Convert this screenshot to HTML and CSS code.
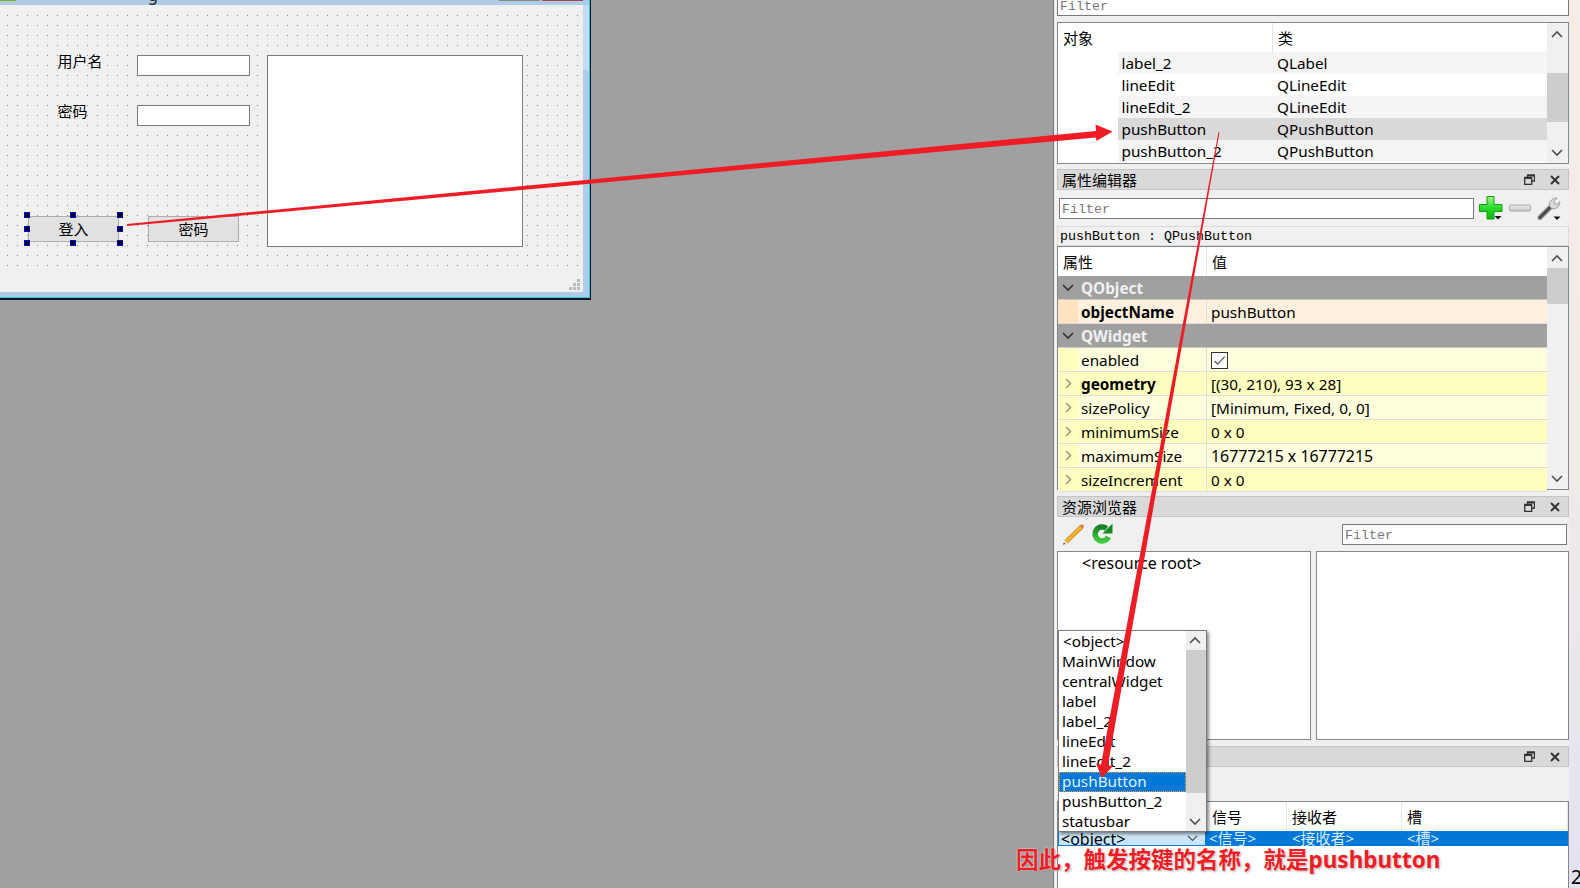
FILE: index.html
```html
<!DOCTYPE html>
<html lang="zh-CN">
<head>
  <meta charset="UTF-8">
  <title>Qt Designer</title>
  <link rel="stylesheet" href="styles.css">
</head>
<body>

  <!-- Zone centrale avec la fenetre en cours d'edition -->
  <div class="canvas">
    <div class="form-window">
      <div class="form-title">
        <span class="form-icon"></span>
        <span class="form-glyph">g</span>
        <span class="form-btn form-btn-max"></span>
        <span class="form-btn form-btn-close"></span>
      </div>
      <div class="form-body">
        <div class="form-grid">
          <span class="fw-label lbl-user">用户名</span>
          <span class="fw-label lbl-pass">密码</span>
          <div class="fw-input in-user"></div>
          <div class="fw-input in-pass"></div>
          <div class="fw-input in-text"></div>
          <div class="fw-button btn-login">登入</div>
          <div class="fw-button btn-pass">密码</div>
          <i class="handle h1"></i><i class="handle h2"></i><i class="handle h3"></i>
          <i class="handle h4"></i><i class="handle h5"></i>
          <i class="handle h6"></i><i class="handle h7"></i><i class="handle h8"></i>
        </div>
        <div class="form-status">
          <svg class="grip" width="11" height="11" viewBox="0 0 11 11">
            <path fill="#bbb" d="M8 0h3v3H8zM4 4h3v3H4zM8 4h3v3H8zM0 8h3v3H0zM4 8h3v3H4zM8 8h3v3H8z"/>
          </svg>
        </div>
      </div>
    </div>
  </div>

  <!-- Colonne de droite : docks -->
  <div class="side">
    <div class="docks">
      <div class="top-filter mono">Filter</div>

      <!-- Inspecteur d'objets -->
      <div class="tree">
        <div class="tree-main">
          <div class="head">
            <span class="head-cell tree-col">对象</span>
            <span class="head-cell">类</span>
          </div>
          <div class="tree-row alt"><span class="tree-col">label_2</span><span>QLabel</span></div>
          <div class="tree-row"><span class="tree-col">lineEdit</span><span>QLineEdit</span></div>
          <div class="tree-row alt"><span class="tree-col">lineEdit_2</span><span>QLineEdit</span></div>
          <div class="tree-row sel"><span class="tree-col">pushButton</span><span>QPushButton</span></div>
          <div class="tree-row alt"><span class="tree-col">pushButton_2</span><span>QPushButton</span></div>
        </div>
        <div class="vscroll">
          <svg class="chev" width="12" height="8" viewBox="0 0 12 8"><path d="M1 7l5-5 5 5" fill="none" stroke="#505050" stroke-width="1.6"/></svg>
          <div class="track"><div class="thumb thumb-tree"></div></div>
          <svg class="chev" width="12" height="8" viewBox="0 0 12 8"><path d="M1 1l5 5 5-5" fill="none" stroke="#505050" stroke-width="1.6"/></svg>
        </div>
      </div>

      <!-- Editeur de proprietes -->
      <div class="dock-title dock-first">
        <span class="dock-name">属性编辑器</span>
        <svg class="float-ic" width="11" height="11" viewBox="0 0 11 11"><path fill="none" stroke="#333" stroke-width="1.3" d="M3.5 3V1h7v6H8M.7 3.5h7v7h-7z"/><path stroke="#333" stroke-width="1.6" d="M3.5 1.700h7M.7 4.200h7"/></svg>
        <svg class="close-ic" width="10" height="10" viewBox="0 0 10 10"><path stroke="#333" stroke-width="2" d="M1 1l8 8M9 1l-8 8"/></svg>
      </div>
      <div class="prop-tools">
        <div class="prop-filter mono">Filter</div>
        <span class="tool-ic">
          <svg width="24" height="24" viewBox="0 0 24 24">
            <defs><linearGradient id="vert" x1="0" y1="0" x2="0" y2="1"><stop offset="0" stop-color="#a6f58c"/><stop offset=".5" stop-color="#28dc28"/><stop offset="1" stop-color="#12b412"/></linearGradient></defs>
            <path fill="url(#vert)" stroke="#159a15" d="M8 .5h7v8h8v7h-8v7.500H8v-7.500H.5v-7H8z"/>
            <path fill="#111" d="M15.500 20h7l-3.500 3.500z"/>
          </svg>
        </span>
        <span class="tool-ic">
          <svg width="24" height="24" viewBox="0 0 24 24">
            <defs><linearGradient id="gris" x1="0" y1="0" x2="0" y2="1"><stop offset="0" stop-color="#eee"/><stop offset="1" stop-color="#c4c4c4"/></linearGradient></defs>
            <rect x="1.500" y="9" width="21" height="6" rx="1" fill="url(#gris)" stroke="#a8a8a8"/>
          </svg>
        </span>
        <span class="tool-ic">
          <svg width="24" height="24" viewBox="0 0 24 24">
            <path stroke="#8a8a8a" stroke-width="5" stroke-linecap="round" d="M3 21.500l12-12"/>
            <path stroke="#444" stroke-width="2.400" stroke-linecap="round" d="M3 21.500l12-12"/>
            <path fill="#d8d8d8" stroke="#8a8a8a" stroke-width=".8" d="M12.500 10.500c-1-3.500 1.500-8 6.500-8.500l1 .4-3 3 .8 2.200 2.300.7 2.700-2.600c.6 4.300-3.800 8-7.800 7z"/>
            <path fill="#111" d="M16.500 20.500h7l-3.500 3.500z"/>
          </svg>
        </span>
      </div>
      <div class="prop-class mono">pushButton : QPushButton</div>

      <div class="props">
        <div class="props-main">
          <div class="head head-props">
            <span class="head-cell prop-col">属性</span>
            <span class="head-cell">值</span>
          </div>
          <div class="group"><svg class="arrow" width="12" height="8" viewBox="0 0 12 8"><path d="M1 1l5 5 5-5" fill="none" stroke="#333" stroke-width="1.7"/></svg><b>QObject</b></div>
          <div class="prop orange"><span class="gutter"></span><b class="pname">objectName</b><span class="pval">pushButton</span></div>
          <div class="group"><svg class="arrow" width="12" height="8" viewBox="0 0 12 8"><path d="M1 1l5 5 5-5" fill="none" stroke="#333" stroke-width="1.7"/></svg><b>QWidget</b></div>
          <div class="prop pale"><span class="gutter"></span><span class="pname">enabled</span>
            <span class="pval"><svg class="check" width="17" height="17" viewBox="0 0 17 17"><rect x=".5" y=".5" width="16" height="16" fill="#fff" stroke="#333"/><path d="M3.500 9l3.200 3.200 7-7.500" fill="none" stroke="#555" stroke-width="1.200"/></svg></span></div>
          <div class="prop deep"><span class="gutter"><svg width="7" height="11" viewBox="0 0 7 11"><path d="M1 1l4.500 4.500L1 10" fill="none" stroke="#888" stroke-width="1.400"/></svg></span><b class="pname">geometry</b><span class="pval">[(30, 210), 93 x 28]</span></div>
          <div class="prop pale"><span class="gutter"><svg width="7" height="11" viewBox="0 0 7 11"><path d="M1 1l4.500 4.500L1 10" fill="none" stroke="#888" stroke-width="1.400"/></svg></span><span class="pname">sizePolicy</span><span class="pval">[Minimum, Fixed, 0, 0]</span></div>
          <div class="prop deep"><span class="gutter"><svg width="7" height="11" viewBox="0 0 7 11"><path d="M1 1l4.500 4.500L1 10" fill="none" stroke="#888" stroke-width="1.400"/></svg></span><span class="pname">minimumSize</span><span class="pval">0 x 0</span></div>
          <div class="prop pale"><span class="gutter"><svg width="7" height="11" viewBox="0 0 7 11"><path d="M1 1l4.500 4.500L1 10" fill="none" stroke="#888" stroke-width="1.400"/></svg></span><span class="pname">maximumSize</span><span class="pval digits">16777215 x 16777215</span></div>
          <div class="prop deep"><span class="gutter"><svg width="7" height="11" viewBox="0 0 7 11"><path d="M1 1l4.500 4.500L1 10" fill="none" stroke="#888" stroke-width="1.400"/></svg></span><span class="pname">sizeIncrement</span><span class="pval">0 x 0</span></div>
        </div>
        <div class="vscroll">
          <svg class="chev" width="12" height="8" viewBox="0 0 12 8"><path d="M1 7l5-5 5 5" fill="none" stroke="#505050" stroke-width="1.6"/></svg>
          <div class="track"><div class="thumb thumb-props"></div></div>
          <svg class="chev" width="12" height="8" viewBox="0 0 12 8"><path d="M1 1l5 5 5-5" fill="none" stroke="#505050" stroke-width="1.6"/></svg>
        </div>
      </div>

      <!-- Navigateur de ressources -->
      <div class="dock-title">
        <span class="dock-name">资源浏览器</span>
        <svg class="float-ic" width="11" height="11" viewBox="0 0 11 11"><path fill="none" stroke="#333" stroke-width="1.3" d="M3.500 3V1h7v6H8M.7 3.500h7v7h-7z"/><path stroke="#333" stroke-width="1.600" d="M3.500 1.700h7M.7 4.200h7"/></svg>
        <svg class="close-ic" width="10" height="10" viewBox="0 0 10 10"><path stroke="#333" stroke-width="2" d="M1 1l8 8M9 1l-8 8"/></svg>
      </div>
      <div class="res-tools">
        <svg width="23" height="22" viewBox="0 0 23 22">
          <path fill="#f3b331" stroke="#b97f14" stroke-width=".8" d="M18 2.500l3 2.700L5.500 20 2.800 17.500z"/>
          <path fill="#e0703c" d="M18 2.500c1-1.300 2.400-1.300 3.200-.4.8.9.8 2.100-.2 3.100z"/>
          <path fill="#f1dcb0" d="M2.800 17.500L5.500 20 1.200 21.500z"/>
          <path fill="#444" d="M1 21.800l.8-2.200 1.500 1.400z"/>
        </svg>
        <svg class="refresh" width="21" height="22" viewBox="0 0 21 22">
          <defs><linearGradient id="vertf" x1="0" y1="0" x2="0" y2="1"><stop offset="0" stop-color="#1c7f2a"/><stop offset="1" stop-color="#3fce3f"/></linearGradient></defs>
          <path fill="none" stroke="url(#vertf)" stroke-width="5.500" d="M16.500 14a7 7 0 1 1-2-8.500"/>
          <path fill="#168a26" d="M10.500 10.500h10V.5z"/>
        </svg>
        <div class="res-filter mono">Filter</div>
      </div>
      <div class="res-panels">
        <div class="res-tree">&lt;resource root&gt;</div>
        <div class="res-view"></div>
      </div>

      <!-- Editeur signaux / slots -->
      <div class="dock-title">
        <span class="dock-name"></span>
        <svg class="float-ic" width="11" height="11" viewBox="0 0 11 11"><path fill="none" stroke="#333" stroke-width="1.300" d="M3.500 3V1h7v6H8M.7 3.500h7v7h-7z"/><path stroke="#333" stroke-width="1.600" d="M3.500 1.700h7M.7 4.200h7"/></svg>
        <svg class="close-ic" width="10" height="10" viewBox="0 0 10 10"><path stroke="#333" stroke-width="2" d="M1 1l8 8M9 1l-8 8"/></svg>
      </div>
      <div class="sig-tools"></div>
      <div class="sig-table">
        <div class="sig-head">
          <span class="sig-c0"></span>
          <span class="sig-c1">信号</span>
          <span class="sig-c2">接收者</span>
          <span class="sig-c3">槽</span>
        </div>
        <div class="sig-row">
          <span class="sig-c0 sig-combo">&lt;object&gt;
            <svg class="combo-arrow" width="11" height="7" viewBox="0 0 11 7"><path d="M1 1l4.500 4.500L10 1" fill="none" stroke="#555" stroke-width="1.200"/></svg>
          </span>
          <span class="sig-c1">&lt;信号&gt;</span>
          <span class="sig-c2">&lt;接收者&gt;</span>
          <span class="sig-c3">&lt;槽&gt;</span>
        </div>
      </div>
    </div>
    <div class="strip">2</div>
  </div>

  <!-- Liste deroulante ouverte -->
  <div class="popup">
    <div class="popup-list">
      <div class="popup-item first">&lt;object&gt;</div>
      <div class="popup-item">MainWindow</div>
      <div class="popup-item">centralWidget</div>
      <div class="popup-item">label</div>
      <div class="popup-item">label_2</div>
      <div class="popup-item">lineEdit</div>
      <div class="popup-item">lineEdit_2</div>
      <div class="popup-item current">pushButton</div>
      <div class="popup-item">pushButton_2</div>
      <div class="popup-item">statusbar</div>
    </div>
    <div class="vscroll popup-scroll">
      <svg class="chev" width="12" height="8" viewBox="0 0 12 8"><path d="M1 7l5-5 5 5" fill="none" stroke="#505050" stroke-width="1.6"/></svg>
      <div class="track"><div class="thumb thumb-popup"></div></div>
      <svg class="chev" width="12" height="8" viewBox="0 0 12 8"><path d="M1 1l5 5 5-5" fill="none" stroke="#505050" stroke-width="1.6"/></svg>
    </div>
  </div>

  <!-- Annotations rouges ajoutees sur la capture -->
  <svg class="marks" width="1580" height="888" viewBox="0 0 1580 888">
    <path fill="#ee1c25" d="M127 224L1096 131 1095.500 124.500 1112.500 131.500 1096.500 141 1096 137.500 127 226z"/>
    <path fill="#ee1c25" d="M1218.500 132L1219.500 132.200 1108 765 1112.500 766.500 1102 778 1096 763.500 1101 764.500z"/>
  </svg>
  <div class="note">因此，触发按键的名称，就是pushbutton</div>

</body>
</html>
```

FILE: styles.css
```css
/* Base de la page */
* {
  box-sizing: border-box;
}

html, body {
  margin: 0;
  height: 888px;
  overflow: hidden;
}

body {
  width: 1580px;
  display: flex;
  position: relative;
  background: #a0a0a0;
  color: #000;
  font-family: "Noto Sans", "Noto Sans CJK SC", sans-serif;
  font-size: 15.3px;
}

.mono {
  font-family: "Liberation Mono", "Noto Sans CJK SC", monospace;
  font-size: 13.33px;
}

/* Zone centrale */
.canvas {
  flex: 0 0 1053px;
  position: relative;
  background: #a0a0a0;
}

.form-window {
  position: absolute;
  left: 0;
  top: 0;
  width: 591px;
  height: 300px;
  display: flex;
  flex-direction: column;
  background: #afcbe8;
  border-right: 1px solid #0a1a22;
  border-bottom: 2px solid #0a1a22;
  box-shadow: inset -1px -1px 0 #35c5e8;
  padding: 0 7px 6px 0;
}

/* Bord droit plus clair en haut de la fenetre */
.form-window::after {
  content: "";
  position: absolute;
  right: 1px;
  top: 5px;
  width: 6px;
  height: 65px;
  background: #c6dbef;
}

.form-title {
  height: 5px;
  flex: none;
  position: relative;
  overflow: hidden;
}

.form-icon {
  position: absolute;
  left: 0;
  top: 0;
  width: 16px;
  height: 1px;
  background: #7cb518;
}

.form-glyph {
  position: absolute;
  left: 148px;
  top: -15px;
  font-size: 16px;
  line-height: 20px;
  color: #222;
}

.form-btn {
  position: absolute;
  top: 0;
  width: 41px;
  height: 1px;
  background: #888;
}

.form-btn-max {
  left: 499px;
}

.form-btn-close {
  left: 542px;
  background: #a04848;
}

.form-body {
  flex: 1;
  display: flex;
  flex-direction: column;
  background: #f0f0f0;
  padding-top: 10px;
}

/* Grille de points du formulaire */
.form-grid {
  flex: none;
  width: 580px;
  height: 256px;
  position: relative;
  background-image: radial-gradient(circle at 7.5px 0.5px, #808080 0.6px, transparent 0.75px);
  background-size: 10px 10px;
}

.form-status {
  flex: 1;
  display: flex;
  justify-content: flex-end;
  align-items: flex-end;
  padding: 0 3px 2px 0;
}

.fw-label {
  position: absolute;
  font-size: 15px;
  line-height: 20px;
}

.lbl-user {
  left: 57.5px;
  top: 36px;
}

.lbl-pass {
  left: 57.5px;
  top: 86px;
}

.fw-input {
  position: absolute;
  background: #fff;
  border: 1px solid #7a7a7a;
}

.in-user {
  left: 137px;
  top: 40px;
  width: 113px;
  height: 21px;
}

.in-pass {
  left: 137px;
  top: 90px;
  width: 113px;
  height: 21px;
}

.in-text {
  left: 267px;
  top: 40px;
  width: 256px;
  height: 192px;
}

.fw-button {
  position: absolute;
  top: 201px;
  width: 91px;
  height: 26px;
  display: flex;
  align-items: center;
  justify-content: center;
  padding-bottom: 2px;
  background: #e1e1e1;
  border: 1px solid #adadad;
  font-size: 15px;
}

.btn-login {
  left: 28px;
}

.btn-pass {
  left: 148px;
}

.handle {
  position: absolute;
  width: 6px;
  height: 6px;
  background: #000;
  border: 1px solid #0000e0;
}

.h1 { left: 24px; top: 197px; }
.h2 { left: 70px; top: 197px; }
.h3 { left: 117px; top: 197px; }
.h4 { left: 24px; top: 211px; }
.h5 { left: 117px; top: 211px; }
.h6 { left: 24px; top: 225px; }
.h7 { left: 70px; top: 225px; }
.h8 { left: 117px; top: 225px; }

/* Colonne de droite */
.side {
  flex: 1;
  display: flex;
  background: #f0f0f0;
  border-left: 1px solid #777;
  padding-left: 3px;
}

.docks {
  flex: 0 0 512px;
  display: flex;
  flex-direction: column;
}

.strip {
  flex: 1;
  display: flex;
  align-items: flex-end;
  padding-left: 2px;
  font-size: 19px;
  line-height: 22px;
  background: linear-gradient(#f5ece6, #f1ebe8 50%, #e3e2f0);
  height: 888px;
}

.top-filter {
  height: 16px;
  flex: none;
  background: #fff;
  border: 1px solid #7a7a7a;
  border-top: 0;
  padding-left: 2px;
  line-height: 13px;
  color: #777;
}

/* Arbres et tableaux */
.tree {
  flex: none;
  height: 142px;
  margin-top: 6px;
  display: flex;
  background: #fff;
  border: 1px solid #828790;
}

.tree-main, .props-main {
  flex: 1;
  min-width: 0;
  background: #fff;
}

.head {
  height: 29px;
  display: flex;
  align-items: center;
  font-size: 15px;
}

.head-cell {
  height: 100%;
  display: flex;
  align-items: center;
  padding-left: 5px;
}

.tree-col {
  flex: 0 0 215px;
}

.head .tree-col {
  border-right: 1px solid #e5e5e5;
}

.tree-row {
  height: 22px;
  margin-left: 60px;
  display: flex;
  align-items: center;
  line-height: 22px;
  padding-left: 3.5px;
}

.tree-row .tree-col {
  flex: 0 0 155.5px;
}

.tree-row.alt {
  background: #f5f5f5;
}

.tree-row.sel {
  background: #d9d9d9;
}

.vscroll {
  flex: 0 0 21px;
  width: 21px;
  display: flex;
  flex-direction: column;
  align-items: center;
  background: #f0f0f0;
  padding: 7px 0 6px;
}

.chev {
  flex: none;
  margin-right: 2px;
}

.track {
  flex: 1;
  width: 100%;
  position: relative;
}

.thumb {
  position: absolute;
  left: 0;
  right: 0;
  background: #cdcdcd;
}

.thumb-tree {
  top: 35px;
  height: 49px;
}

.thumb-props {
  top: 6px;
  height: 36px;
}

.thumb-popup {
  top: 6px;
  height: 143px;
}

/* Titres des docks */
.dock-title {
  flex: none;
  height: 21px;
  margin-top: 6px;
  display: flex;
  align-items: center;
  background: #d9d9d9;
  border: 1px solid #c4c4c4;
  padding: 0 8px 0 4px;
}

.dock-first {
  margin-top: 5px;
}

.dock-name {
  flex: 1;
  font-size: 15px;
}

.float-ic {
  margin-right: 15px;
}

/* Barre du filtre des proprietes */
.prop-tools {
  flex: none;
  height: 36px;
  display: flex;
  align-items: center;
  padding: 0 6px 0 2px;
}

.prop-filter {
  flex: 0 0 415px;
  height: 21px;
  background: #fff;
  border: 1px solid #7a7a7a;
  padding-left: 2px;
  line-height: 21px;
  color: #777;
  margin-right: 3px;
}

.tool-ic {
  flex: 1;
  display: flex;
  justify-content: center;
}

.prop-class {
  flex: none;
  height: 20px;
  line-height: 20px;
  padding-left: 2px;
  background: #f0f0f0;
  border: 1px solid #dcdcdc;
}

.props {
  flex: none;
  height: 244px;
  display: flex;
  background: #fff;
  border: 1px solid #828790;
}

.head-props .prop-col {
  flex: 0 0 149px;
  border-right: 1px solid #e5e5e5;
}

.group {
  height: 24px;
  display: flex;
  align-items: center;
  background: #a0a0a0;
  color: #f0f0f0;
  border-bottom: 1px solid #c8c8c8;
}

.group b {
  font-weight: 700;
  margin-left: 7px;
}

.arrow {
  margin-left: 4px;
  flex: none;
}

.prop {
  height: 24px;
  display: flex;
  align-items: center;
  border-bottom: 1px solid #dcdcdc;
  overflow: hidden;
}

.gutter {
  flex: 0 0 20px;
  height: 100%;
  display: flex;
  align-items: center;
  justify-content: center;
}

.pname {
  flex: 0 0 129px;
  height: 100%;
  line-height: 25px;
  padding-left: 3px;
  border-right: 1px solid #dcdcdc;
}

.pval {
  padding: 1px 0 0 4px;
  height: 100%;
  line-height: 22px;
  display: flex;
  align-items: center;
}

.digits {
  font-size: 15.9px;
}

.orange {
  background: #fff1de;
}

.orange .gutter {
  background: #ffe4bf;
}

.pale {
  background: #ffffde;
}

.pale .gutter {
  background: #ffffbf;
}

.deep {
  background: #ffffbf;
}

/* Navigateur de ressources */
.res-tools {
  flex: none;
  height: 34px;
  display: flex;
  align-items: center;
  padding: 0 2px 0 5px;
}

.refresh {
  margin-left: 7px;
}

.res-filter {
  margin-left: auto;
  width: 225px;
  height: 21px;
  background: #fff;
  border: 1px solid #7a7a7a;
  padding-left: 2px;
  line-height: 22px;
  color: #777;
}

.res-panels {
  flex: none;
  height: 189px;
  display: flex;
  gap: 5px;
}

.res-tree {
  flex: 0 0 254px;
  background: #fff;
  border: 1px solid #828790;
  padding-left: 24px;
  font-size: 16px;
  line-height: 22px;
}

.res-view {
  flex: 1;
  background: #fff;
  border: 1px solid #828790;
}

.sig-tools {
  flex: none;
  height: 34px;
}

/* Tableau signaux / slots */
.sig-table {
  flex: 1;
  background: #fff;
  border-top: 1px solid #828790;
  border-left: 1px solid #828790;
  border-right: 1px solid #828790;
}

.sig-head, .sig-row {
  display: flex;
  font-size: 15px;
}

.sig-head {
  height: 29px;
  align-items: center;
}

.sig-head span {
  height: 100%;
  display: flex;
  align-items: center;
  border-right: 1px solid #e5e5e5;
}

.sig-row {
  height: 15px;
  line-height: 15px;
  background: #0078d7;
  color: #dcecfa;
  overflow: hidden;
}

.sig-c0 {
  flex: 0 0 148px;
}

.sig-c1 {
  flex: 0 0 81px;
  padding-left: 6px;
}

.sig-c2 {
  flex: 0 0 115px;
  padding-left: 5px;
}

.sig-c3 {
  flex: 1;
  padding-left: 5px;
}

.sig-row .sig-c1 {
  padding-left: 3px;
}

.sig-combo {
  position: relative;
  background: #cce4f7;
  color: #000;
  font-size: 16px;
  padding-left: 2px;
  border: 1px solid #0078d7;
}

.combo-arrow {
  position: absolute;
  right: 7px;
  top: 3px;
}

/* Liste deroulante ouverte */
.popup {
  position: absolute;
  left: 1058px;
  top: 630px;
  width: 149px;
  height: 202px;
  display: flex;
  background: #fff;
  border: 1px solid #7a7a7a;
  box-shadow: 2px 2px 3px rgba(0, 0, 0, 0.45);
}

.popup-list {
  flex: 1;
  padding-top: 1px;
}

.popup-item {
  height: 20px;
  line-height: 19px;
  padding-left: 3px;
}

.popup-item.first {
  padding-left: 4px;
}

.popup-item.current {
  background: #0078d7;
  color: #e4f1fb;
  outline: 1px dotted #f0a040;
  outline-offset: -1px;
}

.popup-scroll {
  flex: 0 0 20px;
  width: 20px;
  padding: 5px 0 5px;
}

/* Annotations */
.marks {
  position: absolute;
  left: 0;
  top: 0;
  pointer-events: none;
}

.note {
  position: absolute;
  left: 1016px;
  top: 844px;
  line-height: 32px;
  font-size: 22.5px;
  font-weight: 700;
  color: #ee1c25;
  white-space: nowrap;
  text-shadow: 0 0 2px #fff, 1px 1px 2px rgba(120, 120, 120, 0.7);
}
```
